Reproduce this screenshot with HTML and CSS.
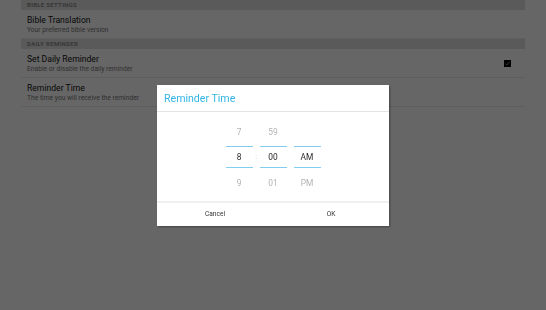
FILE: index.html
```html
<!DOCTYPE html>
<html lang="en">
<head>
    <meta charset="UTF-8">
    <meta name="viewport" content="width=device-width, initial-scale=1.0">
    <title>Settings</title>
    <link rel="stylesheet" href="styles.css">
</head>
<body>
    <div class="settings">
        <div class="section-header">BIBLE SETTINGS</div>
        <div class="pref">
            <div class="pref-text">
                <div class="pref-title">Bible Translation</div>
                <div class="pref-summary">Your preferred bible version</div>
            </div>
        </div>

        <div class="section-header">DAILY REMINDER</div>
        <div class="pref">
            <div class="pref-text">
                <div class="pref-title">Set Daily Reminder</div>
                <div class="pref-summary">Enable or disable the daily reminder</div>
            </div>
            <span class="checkbox">
                <svg width="7" height="7" viewBox="0 0 7 7"><path d="M1.5 3.8 L2.8 5 L5.6 1.8" fill="none" stroke="#9a9a9a" stroke-width="0.9"/></svg>
            </span>
        </div>
        <div class="pref">
            <div class="pref-text">
                <div class="pref-title">Reminder Time</div>
                <div class="pref-summary">The time you will receive the reminder</div>
            </div>
        </div>
    </div>

    <!-- dialogo -->
    <div class="overlay">
        <div class="dialog">
            <div class="dialog-title">Reminder Time</div>
            <div class="picker">
                <div class="column">
                    <div class="cell">7</div>
                    <div class="cell selected">8</div>
                    <div class="cell bottom">9</div>
                </div>
                <div class="colon">:</div>
                <div class="column">
                    <div class="cell">59</div>
                    <div class="cell selected">00</div>
                    <div class="cell bottom">01</div>
                </div>
                <div class="column ampm">
                    <div class="cell"></div>
                    <div class="cell selected">AM</div>
                    <div class="cell bottom">PM</div>
                </div>
            </div>
            <div class="buttons">
                <button type="button">Cancel</button>
                <button type="button">OK</button>
            </div>
        </div>
    </div>
</body>
</html>
```

FILE: styles.css
```css
body {
  margin: 0;
  padding: 0;
  background-color: #ffffff;
  font-family: Roboto, "Noto Sans", sans-serif;
}

.settings {
  margin: 0 21px;
}

.section-header {
  height: 10px;
  line-height: 10px;
  padding-left: 6px;
  background-color: #e2e2e2;
  color: #8a8a8a;
  font-size: 6px;
  font-weight: bold;
  letter-spacing: 0.3px;
}

.pref {
  display: flex;
  align-items: center;
  height: 28px;
  padding: 0 14px 0 6px;
  border-bottom: 1px solid #ececec;
}

.pref-text {
  flex: 1;
  align-self: flex-start;
  padding-top: 5px;
}

.pref-title {
  font-size: 8.6px;
  line-height: 11px;
  color: #111111;
}

.pref-summary {
  font-size: 6.7px;
  line-height: 8px;
  color: #7a7a7a;
}

.checkbox {
  display: flex;
  width: 7px;
  height: 7px;
  background-color: #000000;
}

.overlay {
  position: fixed;
  top: 0;
  left: 0;
  right: 0;
  bottom: 0;
  background-color: rgba(0, 0, 0, 0.6);
  display: flex;
  justify-content: center;
  align-items: center;
}

.dialog {
  width: 232px;
  height: 141px;
  background-color: #ffffff;
  box-shadow: 1px 1px 2px rgba(0, 0, 0, 0.35);
  display: flex;
  flex-direction: column;
}

.dialog-title {
  height: 26px;
  line-height: 28px;
  padding-left: 7px;
  font-size: 10.6px;
  color: #33b5e5;
  border-bottom: 1px solid #e4e4e4;
}

.picker {
  flex: 1;
  display: flex;
  justify-content: center;
  padding-top: 8px;
}

.column {
  width: 27px;
  display: flex;
  flex-direction: column;
}

.ampm {
  margin-left: 7px;
}

.colon {
  width: 7px;
  padding-top: 27px;
  line-height: 20px;
  text-align: center;
  font-size: 7px;
  color: #c0c0c0;
}

.cell {
  height: 26px;
  line-height: 24px;
  text-align: center;
  font-size: 8.4px;
  color: #b3b3b3;
}

.cell.selected {
  height: 20px;
  line-height: 20px;
  border-top: 1px solid #84cdee;
  border-bottom: 1px solid #84cdee;
  color: #2a2a2a;
}

.cell.bottom {
  margin-top: 3px;
}

.buttons {
  display: flex;
  height: 23px;
  border-top: 2px solid #f0f0f0;
}

button {
  flex: 1;
  border: none;
  background-color: #ffffff;
  font-family: Roboto, "Noto Sans", sans-serif;
  font-size: 6.6px;
  color: #333333;
  padding: 0;
}
```
